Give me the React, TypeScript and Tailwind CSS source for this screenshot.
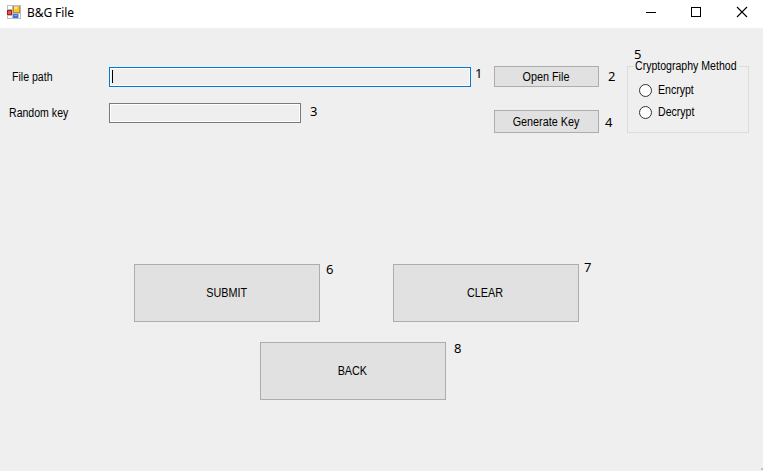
import type { ReactNode } from "react";

function Num({ children, className = "" }: { children: ReactNode; className?: string }) {
  return (
    <span className={`block font-['Noto_Sans',sans-serif] text-[13px] text-black ${className}`}>
      {children}
    </span>
  );
}

function Label({ children, className = "origin-left scale-x-[0.88]" }: { children: ReactNode; className?: string }) {
  return <span className={`inline-block whitespace-nowrap ${className}`}>{children}</span>;
}

function Button({ children, className = "" }: { children: ReactNode; className?: string }) {
  return (
    <button
      type="button"
      className={`flex shrink-0 items-center justify-center border border-[#adadad] bg-[#e1e1e1] pr-px text-black ${className}`}
    >
      <Label className="origin-center scale-x-[0.9]">{children}</Label>
    </button>
  );
}

function Radio({ children }: { children: ReactNode }) {
  return (
    <label className="flex h-[22px] items-center">
      <span className="mr-[6px] h-[13px] w-[13px] rounded-full border border-[#333333] bg-white" />
      <Label>{children}</Label>
    </label>
  );
}

function AppIcon() {
  return (
    <svg width="14" height="14" viewBox="0 0 14 14" shapeRendering="crispEdges" className="ml-[7px] mr-[6px] mt-[5px] shrink-0">
      <rect width="14" height="14" fill="#b9bec5" />
      <path fill="#fff" d="M1 1h4v3H1zM1 11h4v2H1zM12 9h1v4h-1z" />
      <rect y="5" width="5" height="5" fill="#a91c19" />
      <rect x="1" y="6" width="3" height="3" fill="#e25a49" />
      <rect x="6" y="1" width="7" height="7" fill="#c78a13" />
      <rect x="7" y="1" width="5" height="6" fill="#f5c73e" />
      <rect x="7" y="2" width="3" height="2" fill="#ffe58b" />
      <rect x="6" y="9" width="5" height="4" fill="#3b75df" />
      <rect x="7" y="10" width="3" height="1" fill="#75a8ff" />
    </svg>
  );
}

export default function App() {
  return (
    <div className="flex h-[471px] w-[763px] flex-col overflow-hidden bg-[#efefef] font-['Liberation_Sans',sans-serif] text-[12px] leading-[14px] text-black">
      <header className="flex h-7 shrink-0 bg-white">
        <AppIcon />
        <span className="mt-[6px] font-['Noto_Sans',sans-serif] text-[12px] tracking-[-0.1px]">B&amp;G File</span>
        <svg width="117" height="28" viewBox="0 0 117 28" className="ml-auto" fill="none" stroke="#000">
          <path d="M0 12.5h10M45.5 7.5h9v9h-9z" shapeRendering="crispEdges" />
          <path d="M91 7l10 10M101 7L91 17" strokeWidth="1.1" />
        </svg>
      </header>

      <main className="flex flex-1 flex-col">
        <section className="flex h-[236px] shrink-0">
          <div className="w-[494px] shrink-0 pt-[39px]">
            <div className="flex h-5">
              <span className="w-[109px] pl-3 pt-[3px]"><Label>File path</Label></span>
              <div className="h-5 w-[362px] border border-[#0078d7] bg-white p-px">
                <div className="h-full bg-[#efefef] pl-[1px] pt-[1px]">
                  <div className="h-[13px] w-px bg-black" />
                </div>
              </div>
              <Num className="-mt-px ml-[4px]">1</Num>
            </div>
            <div className="mt-4 flex h-5">
              <span className="w-[109px] pl-[9px] pt-[3px]"><Label>Random key</Label></span>
              <div className="h-5 w-48 border border-[#7a7a7a] bg-white p-px">
                <div className="h-full bg-[#efefef]" />
              </div>
              <Num className="ml-[9px] mt-px">3</Num>
            </div>
          </div>

          <div className="w-[133px] shrink-0 pt-[38px]">
            <div className="flex h-[21px]">
              <Button className="h-[21px] w-[105px]">Open File</Button>
              <Num className="ml-[9px] mt-[3px]">2</Num>
            </div>
            <div className="mt-[23px] flex h-[23px]">
              <Button className="h-[23px] w-[105px]">Generate Key</Button>
              <Num className="ml-[6px] mt-[5px]">4</Num>
            </div>
          </div>

          <div className="w-[122px] shrink-0 pt-[20px]">
            <Num className="ml-[7px] h-[11px] leading-[12px]">5</Num>
            <fieldset className="h-[74px] border border-[#dcdcdc] pl-[11px]">
              <legend className="-ml-[5px] h-[14px] w-[105px] pl-px"><Label>Cryptography Method</Label></legend>
              <div className="mt-[6px]">
                <Radio>Encrypt</Radio>
                <Radio>Decrypt</Radio>
              </div>
            </fieldset>
          </div>
        </section>

        <section className="flex h-[78px] shrink-0 pl-[134px]">
          <Button className="h-[58px] w-[186px]">SUBMIT</Button>
          <Num className="-mt-[2px] ml-[6px] w-[67px]">6</Num>
          <Button className="h-[58px] w-[186px]">CLEAR</Button>
          <Num className="-mt-[4px] ml-[5px]">7</Num>
        </section>

        <section className="flex h-[58px] shrink-0 pl-[260px]">
          <Button className="h-[58px] w-[186px]">BACK</Button>
          <Num className="-mt-px ml-[8px]">8</Num>
        </section>
        <div className="ml-auto mt-auto mb-[1px] h-[2px] w-[2px] bg-[#bfbfbf]" />
      </main>
    </div>
  );
}
